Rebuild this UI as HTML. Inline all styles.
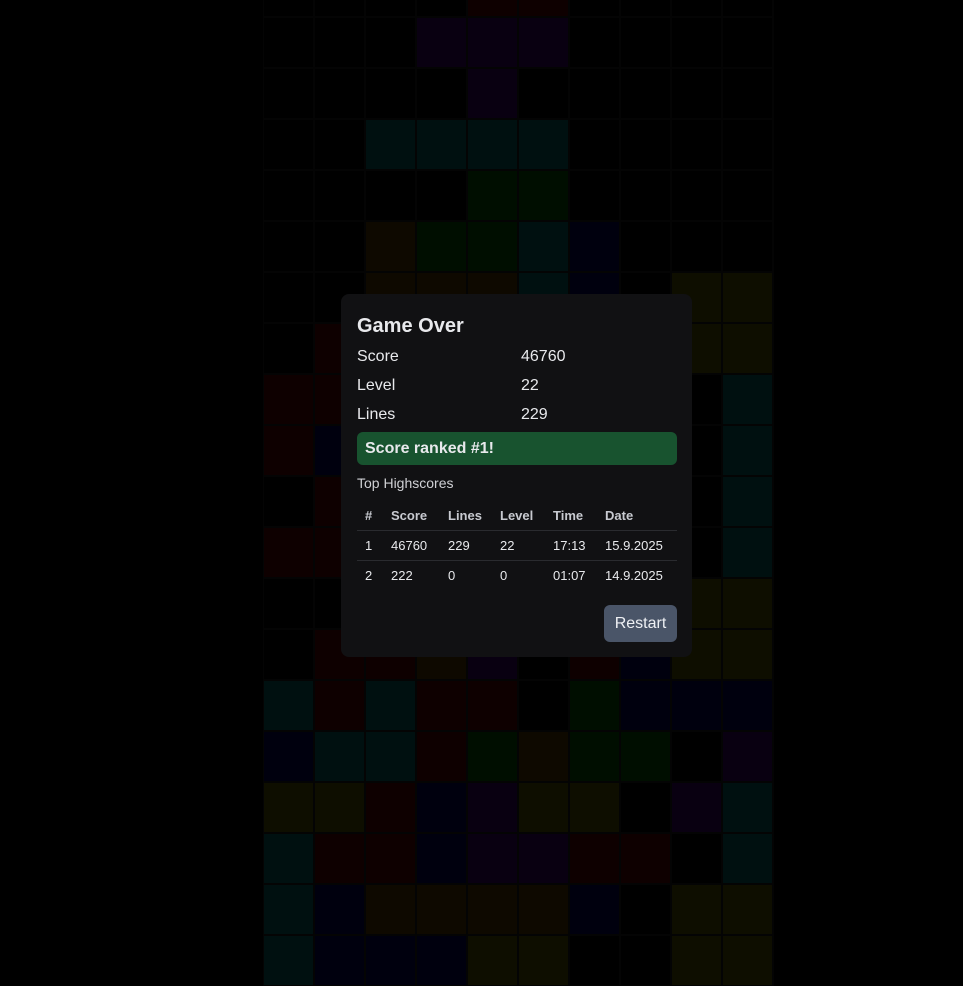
<!DOCTYPE html>
<html><head><meta charset="utf-8"><style>
body{margin:0;width:963px;height:971px;background:#000;overflow:hidden;position:relative;font-family:"Liberation Sans",sans-serif;}
#g{position:absolute;left:263px;top:-34px;width:511px;height:1020px;background:#040404;}
.c{position:absolute;width:49px;height:49px;}
.dlg{position:absolute;left:341px;top:294px;width:351px;height:363px;background:#111113;border-radius:8px;color:#e8e9ec;box-sizing:border-box;}
.t{position:absolute;left:16px;top:21px;font-size:20px;font-weight:bold;}
.row{position:absolute;left:16px;font-size:16px;}
.row span{position:absolute;left:164px;}
.ban{position:absolute;left:16px;top:138px;width:320px;height:33px;background:#18532f;border-radius:6px;font-weight:bold;font-size:16px;line-height:34px;box-sizing:border-box;padding-left:8px;}
.hs{position:absolute;left:16px;top:181px;font-size:14px;color:#d0d1d5;}
table{position:absolute;left:16px;top:207px;width:320px;border-collapse:collapse;font-size:13px;}
th{text-align:left;font-weight:bold;color:#c8cad0;height:29px;padding:0 0 0 8px;}
td{height:29px;padding:0 0 0 8px;border-top:1px solid #2a2b2f;}
.btn{position:absolute;left:263px;top:311px;width:73px;height:37px;background:#4a5568;border-radius:6px;font-size:16px;line-height:38px;text-align:center;color:#eef0f4;}
</style></head><body>
<div id="g"></div>
<div class="dlg">
<div class="t">Game Over</div>
<div class="row" style="top:54px">Score<span>46760</span></div>
<div class="row" style="top:83px">Level<span>22</span></div>
<div class="row" style="top:112px">Lines<span>229</span></div>
<div class="ban">Score ranked #1!</div>
<div class="hs">Top Highscores</div>
<table>
<tr><th style="width:18px">#</th><th style="width:49px">Score</th><th style="width:44px">Lines</th><th style="width:45px">Level</th><th style="width:44px">Time</th><th>Date</th></tr>
<tr><td>1</td><td>46760</td><td>229</td><td>22</td><td>17:13</td><td>15.9.2025</td></tr>
<tr><td>2</td><td>222</td><td>0</td><td>0</td><td>01:07</td><td>14.9.2025</td></tr>
</table>
<div class="btn">Restart</div>
</div>
<script>
var rows=["....RR....","...PPP....","....P.....","..CCCC....","....GG....","..OGGCB...","..OOOCB.YY",".R......YY","RR......KC","RB.......C",".R.......C","RR.......C","........YY",".RROPKRBYY","CRCRRKGBBB","BCCRGOGGKP","YYRBPYYKPC","CRRBPPRRKC","CBOOOOBKYY","CBBBYYKKYY"];
var col={'.':'#000',R:'#0e0000',P:'#090011',C:'#001010',G:'#000e00',O:'#0e0900',B:'#00000e',Y:'#0e0e00',K:'#000'};
var g=document.getElementById('g'),h='';
for(var r=0;r<20;r++)for(var c=0;c<10;c++){h+='<div class="c" style="left:'+(c*51+1)+'px;top:'+(r*51+1)+'px;background:'+col[rows[r][c]]+'"></div>';}
g.innerHTML=h;
</script>
</body></html>
